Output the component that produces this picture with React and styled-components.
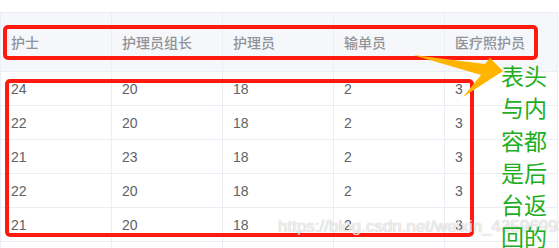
import React from 'react';
import styled, { createGlobalStyle } from 'styled-components';

const GlobalStyle = createGlobalStyle`
  html, body {
    margin: 0;
    padding: 0;
    background: #fff;
    font-family: 'Liberation Sans', Arial, 'Noto Sans CJK SC', sans-serif;
  }
`;

const Page = styled.div`
  position: relative;
  width: 559px;
  height: 248px;
  overflow: hidden;
  padding-top: 12px;
  box-sizing: border-box;
`;

const Table = styled.div`
  width: 558px;
  border-top: 1px solid #ebeef5;
  border-left: 1px solid #ebeef5;
  box-sizing: border-box;
`;

const Row = styled.div`
  display: grid;
  grid-template-columns: 111px 111px 111px 111px 113px;
  height: ${(p) => (p.$head ? 59 : 34)}px;
  background: ${(p) => (p.$head ? '#f5f7fa' : '#fff')};
  border-bottom: 1px solid #ebeef5;
  box-sizing: border-box;
`;

const Cell = styled.div`
  display: flex;
  align-items: center;
  padding-left: 10px;
  border-right: 1px solid #ebeef5;
  font-size: 14px;
  color: ${(p) => (p.$head ? '#909399' : '#606266')};
  font-weight: ${(p) => (p.$head ? 500 : 'normal')};
`;

const Frame = styled.div`
  position: absolute;
  border: 4px solid #ff1a0f;
  border-radius: 5px;
  box-sizing: border-box;
  left: ${(p) => p.$x}px;
  top: ${(p) => p.$y}px;
  width: ${(p) => p.$w}px;
  height: ${(p) => p.$h}px;
`;

const Note = styled.div`
  position: absolute;
  left: 501px;
  top: 59px;
  width: 50px;
  font-family: 'Noto Sans CJK SC', sans-serif;
  font-size: 23px;
  line-height: 32.3px;
  color: #1fae1f;
`;

const Watermark = styled.div`
  position: absolute;
  left: 278px;
  top: 217px;
  font-size: 17px;
  color: rgba(255, 255, 255, 0.8);
  text-shadow: 0 0 1px rgba(110, 110, 110, 0.6);
  white-space: nowrap;
`;

const Arrow = styled.svg`
  position: absolute;
  left: 0;
  top: 0;
`;

const head = ['护士', '护理员组长', '护理员', '输单员', '医疗照护员'];
const rows = [
  [24, 20, 18, 2, 3],
  [22, 20, 18, 2, 3],
  [21, 23, 18, 2, 3],
  [22, 20, 18, 2, 3],
  [21, 20, 18, 2, 3],
  ['', '', '', '', ''],
];
const note = ['表头', '与内', '容都', '是后', '台返', '回的'];

const App = () => (
  <Page>
    <GlobalStyle />
    <Table>
      <Row $head>
        {head.map((h) => (
          <Cell $head key={h}>{h}</Cell>
        ))}
      </Row>
      {rows.map((r, i) => (
        <Row key={i}>
          {r.map((v, j) => (
            <Cell key={j}>{v}</Cell>
          ))}
        </Row>
      ))}
    </Table>
    <Frame $x={3} $y={25} $w={535} $h={35} />
    <Frame $x={5} $y={79} $w={469} $h={158} />
    <Arrow width="559" height="248" viewBox="0 0 559 248">
      <polygon points="413,55 485,64 490,58 503,71 463,97 481,75" fill="#ffb400" />
    </Arrow>
    <Watermark>https://blog.csdn.net/weixin_43596993</Watermark>
    <Note>
      {note.map((n) => (
        <div key={n}>{n}</div>
      ))}
    </Note>
  </Page>
);

export default App;
